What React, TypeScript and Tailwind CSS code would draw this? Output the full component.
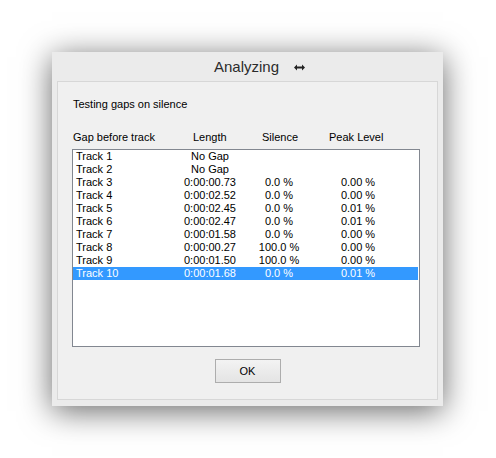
import React from 'react';

interface GapRow {
  track: string;
  length: string;
  silence: string;
  peak: string;
}

const rows: GapRow[] = [
  { track: 'Track 1', length: 'No Gap', silence: '', peak: '' },
  { track: 'Track 2', length: 'No Gap', silence: '', peak: '' },
  { track: 'Track 3', length: '0:00:00.73', silence: '0.0 %', peak: '0.00 %' },
  { track: 'Track 4', length: '0:00:02.52', silence: '0.0 %', peak: '0.00 %' },
  { track: 'Track 5', length: '0:00:02.45', silence: '0.0 %', peak: '0.01 %' },
  { track: 'Track 6', length: '0:00:02.47', silence: '0.0 %', peak: '0.01 %' },
  { track: 'Track 7', length: '0:00:01.58', silence: '0.0 %', peak: '0.00 %' },
  { track: 'Track 8', length: '0:00:00.27', silence: '100.0 %', peak: '0.00 %' },
  { track: 'Track 9', length: '0:00:01.50', silence: '100.0 %', peak: '0.00 %' },
  { track: 'Track 10', length: '0:00:01.68', silence: '0.0 %', peak: '0.01 %' },
];

const SELECTED = 9;

// small double-headed arrow next to the caption
const ResizeArrow: React.FC = () => (
  <svg width="11" height="7" viewBox="0 0 11 7" className="block">
    <path d="M0 3.5 L3 0.5 L3 2.5 L8 2.5 L8 0.5 L11 3.5 L8 6.5 L8 4.5 L3 4.5 L3 6.5 Z" fill="#222" />
  </svg>
);

const App: React.FC = () => {
  return (
    <div
      className="w-[496px] h-[458px] bg-white pt-[52px] pl-[52px]"
      style={{ fontFamily: '"Liberation Sans", Arial, sans-serif' }}
    >
      <div className="w-[391px] h-[354px] bg-[#ebebeb] shadow-[0_5px_30px_rgba(0,0,0,0.6)] flex flex-col">
        {/* caption bar */}
        <div className="h-[29px] grid grid-cols-[1fr_auto_1fr] items-center">
          <div />
          <span className="text-[15px] leading-[18px] text-[#2b2b2b] pl-[1px] pr-[3px]">Analyzing</span>
          <div className="pl-[12px] pt-[1px]">
            <ResizeArrow />
          </div>
        </div>

        {/* client area */}
        <div className="mx-[5px] w-[381px] h-[319px] border border-[#d7d7d7] bg-[#f0f0f0] flex flex-col text-[11px] leading-[13px] text-black">
          <div className="mt-[16px] ml-[15px] h-[13px]">Testing gaps on silence</div>

          <div className="mt-[20px] ml-[15px] h-[13px] flex">
            <span className="w-[120px]">Gap before track</span>
            <span className="w-[69px]">Length</span>
            <span className="w-[67px]">Silence</span>
            <span>Peak Level</span>
          </div>

          <div className="mt-[5px] ml-[14px] w-[348px] h-[198px] border border-[#828790] bg-white">
            {rows.map((r, i) => (
              <div
                key={r.track}
                className={
                  i === SELECTED
                    ? 'h-[13px] mr-[1px] grid grid-cols-[97px_80px_58px_100px] bg-[#3399ff] text-white'
                    : 'h-[13px] mr-[1px] grid grid-cols-[97px_80px_58px_100px]'
                }
              >
                <span className="pl-[3px]">{r.track}</span>
                <span className="text-center">{r.length}</span>
                <span className="text-center">{r.silence}</span>
                <span className="text-center">{r.peak}</span>
              </div>
            ))}
          </div>

          <div className="mt-[12px] flex justify-center">
            <button className="w-[66px] h-[24px] border border-[#adadad] bg-gradient-to-b from-[#f3f3f3] to-[#e4e4e4] text-[11px] text-black">
              OK
            </button>
          </div>
        </div>
      </div>
    </div>
  );
};

export default App;
